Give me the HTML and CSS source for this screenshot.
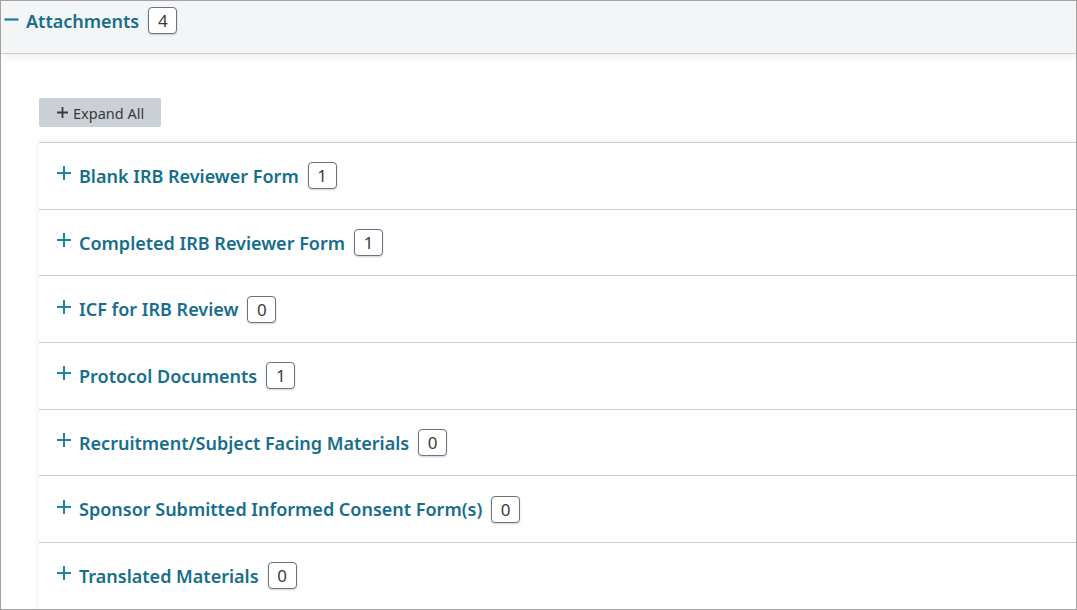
FILE: index.html
```html
<!DOCTYPE html>
<html>
<head>
    <title>Attachments</title>
    <meta name="viewport" content="width=device-width, initial-scale=1.0">
    <link rel="stylesheet" href="styles.css">
</head>
<body>
    <div class="panel">
        <div class="panel-header">
            <svg class="icon-minus" width="15" height="15" viewBox="0 0 15 15"><path d="M0.5 7.5H14.5" stroke="currentColor" stroke-width="2.2"/></svg>
            <span class="panel-title">Attachments</span>
            <span class="badge">4</span>
        </div>
        <div class="panel-body">
            <button class="btn-expand" type="button">
                <svg width="11" height="11" viewBox="0 0 11 11"><path d="M5.5 0V11M0 5.5H11" stroke="currentColor" stroke-width="1.8"/></svg>
                Expand All
            </button>
            <div class="group-list">
                <div class="group-row">
                    <svg class="icon-plus" width="14" height="14" viewBox="0 0 14 14"><path d="M7 0V14M0 7H14" stroke="currentColor" stroke-width="2"/></svg>
                    <span class="group-title">Blank IRB Reviewer Form</span>
                    <span class="badge">1</span>
                </div>
                <div class="group-row">
                    <svg class="icon-plus" width="14" height="14" viewBox="0 0 14 14"><path d="M7 0V14M0 7H14" stroke="currentColor" stroke-width="2"/></svg>
                    <span class="group-title">Completed IRB Reviewer Form</span>
                    <span class="badge">1</span>
                </div>
                <div class="group-row">
                    <svg class="icon-plus" width="14" height="14" viewBox="0 0 14 14"><path d="M7 0V14M0 7H14" stroke="currentColor" stroke-width="2"/></svg>
                    <span class="group-title">ICF for IRB Review</span>
                    <span class="badge">0</span>
                </div>
                <div class="group-row">
                    <svg class="icon-plus" width="14" height="14" viewBox="0 0 14 14"><path d="M7 0V14M0 7H14" stroke="currentColor" stroke-width="2"/></svg>
                    <span class="group-title">Protocol Documents</span>
                    <span class="badge">1</span>
                </div>
                <div class="group-row">
                    <svg class="icon-plus" width="14" height="14" viewBox="0 0 14 14"><path d="M7 0V14M0 7H14" stroke="currentColor" stroke-width="2"/></svg>
                    <span class="group-title">Recruitment/Subject Facing Materials</span>
                    <span class="badge">0</span>
                </div>
                <div class="group-row">
                    <svg class="icon-plus" width="14" height="14" viewBox="0 0 14 14"><path d="M7 0V14M0 7H14" stroke="currentColor" stroke-width="2"/></svg>
                    <span class="group-title">Sponsor Submitted Informed Consent Form(s)</span>
                    <span class="badge">0</span>
                </div>
                <div class="group-row">
                    <svg class="icon-plus" width="14" height="14" viewBox="0 0 14 14"><path d="M7 0V14M0 7H14" stroke="currentColor" stroke-width="2"/></svg>
                    <span class="group-title">Translated Materials</span>
                    <span class="badge">0</span>
                </div>
            </div>
        </div>
    </div>
</body>
</html>
```

FILE: styles.css
```css
body {margin: 0; background: #fff; font-family: "Noto Sans", "Open Sans", sans-serif; overflow: hidden;}
.panel {box-sizing: border-box; width: 1077px; height: 610px; border: 1px solid #a2a2a2; overflow: hidden;}
.panel-header {display: flex; align-items: center; box-sizing: border-box; height: 53px; padding: 6px 0 19px 3px; background: #f4f5f7; border-bottom: 1px solid #c9cdd5; box-shadow: 0 4px 10px rgba(0, 0, 0, 0.06);}
.icon-minus {color: #1b7c9d; margin-right: 7px; margin-top: -3px;}
.panel-title {font-size: 18px; font-weight: 600; color: #176d8c;}
.badge {display: inline-flex; align-items: center; justify-content: center; box-sizing: border-box; min-width: 29px; height: 27px; padding: 0 6px; margin-left: 9px; background: #fff; border: 1px solid #687384; border-radius: 4px; font-size: 17px; font-weight: 400; color: #3b3b3b; box-shadow: 0 1px 2px rgba(0, 0, 0, 0.18);}
.panel-body {padding: 44px 0 0 38px;}
.btn-expand {display: flex; align-items: center; gap: 5px; width: 122px; height: 29px; padding: 0 0 0 18px; margin: 0 0 15px; background: #cbd0d7; border: none; border-radius: 2px; font-family: inherit; font-size: 14.5px; color: #3a3a3a;}
.group-list {border-top: 1px solid #c9cdd5; box-shadow: 0 0 10px rgba(0, 0, 0, 0.07);}
.group-row {display: flex; align-items: center; box-sizing: border-box; height: 66.7px; padding-left: 18px; border-bottom: 1px solid #c9cdd5;}
.icon-plus {color: #1b84a8; margin-right: 8px; margin-top: -5px;}
.group-title {font-size: 18px; font-weight: 600; color: #176d8c;}
```
